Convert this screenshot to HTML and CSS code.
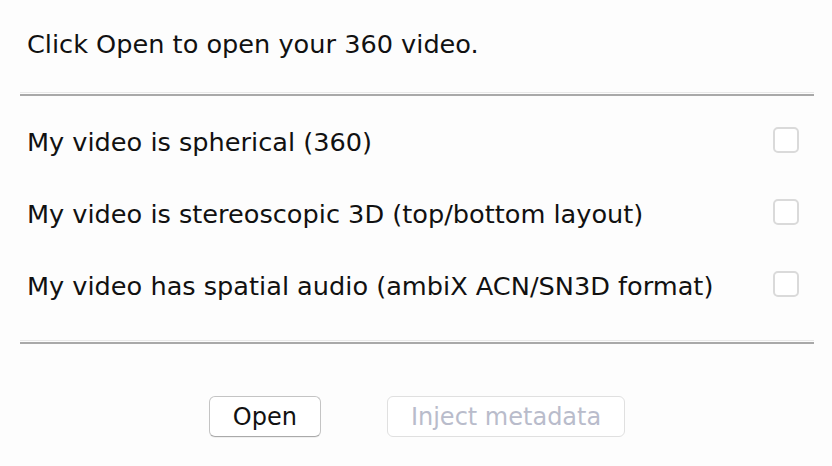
FILE: index.html
```html
<!DOCTYPE html>
<html>
<head>
<meta charset="utf-8">
<link rel="stylesheet" href="styles.css">
</head>
<body>
<div class="dialog">
  <p class="intro">Click Open to open your 360 video.</p>
  <div class="sep"></div>
  <div class="options">
    <label class="row"><span class="label">My video is spherical (360)</span><span class="check"></span></label>
    <label class="row"><span class="label">My video is stereoscopic 3D (top/bottom layout)</span><span class="check"></span></label>
    <label class="row"><span class="label">My video has spatial audio (ambiX ACN/SN3D format)</span><span class="check"></span></label>
  </div>
  <div class="sep"></div>
  <div class="buttons">
    <button class="btn">Open</button>
    <button class="btn disabled">Inject metadata</button>
  </div>
</div>
</body>
</html>
```
FILE: styles.css
```css
html, body {
  margin: 0;
  padding: 0;
  background: #fdfdfd;
}
.dialog {
  width: 832px;
  height: 466px;
  box-sizing: border-box;
  overflow: hidden;
  padding: 29px 18px 0 20px;
  font-family: "DejaVu Sans", "Liberation Sans", sans-serif;
  font-size: 25.6px;
  line-height: 30px;
  color: #111;
}
.intro {
  margin: 0;
  padding-left: 7px;
  height: 63px;
}
.sep {
  border-top: 1px solid #e8e8e8;
  border-bottom: 2px solid #a9a9a9;
  height: 1px;
}
.options {
  padding: 8px 0 20px 0;
}
.row {
  display: flex;
  align-items: center;
  justify-content: space-between;
  height: 72px;
  padding: 0 15px 0 7px;
}
.label {
  padding-top: 3px;
}
.check {
  width: 26px;
  height: 26px;
  box-sizing: border-box;
  border: 2px solid #dadada;
  border-radius: 5px;
  background: #fff;
}
.buttons {
  display: flex;
  justify-content: center;
  gap: 66px;
  padding-top: 52px;
}
.btn {
  font-family: "DejaVu Sans", "Liberation Sans", sans-serif;
  font-size: 24px;
  height: 41px;
  padding: 0 23px;
  background: #fff;
  color: #111;
  border: 1px solid #c4c4c4;
  border-bottom-color: #aaaaaa;
  border-radius: 6px;
  box-shadow: 0 1px 0 rgba(0,0,0,0.05);
}
.btn.disabled {
  color: #b9bccb;
  border-color: #e0e0e0;
  box-shadow: none;
}
```
